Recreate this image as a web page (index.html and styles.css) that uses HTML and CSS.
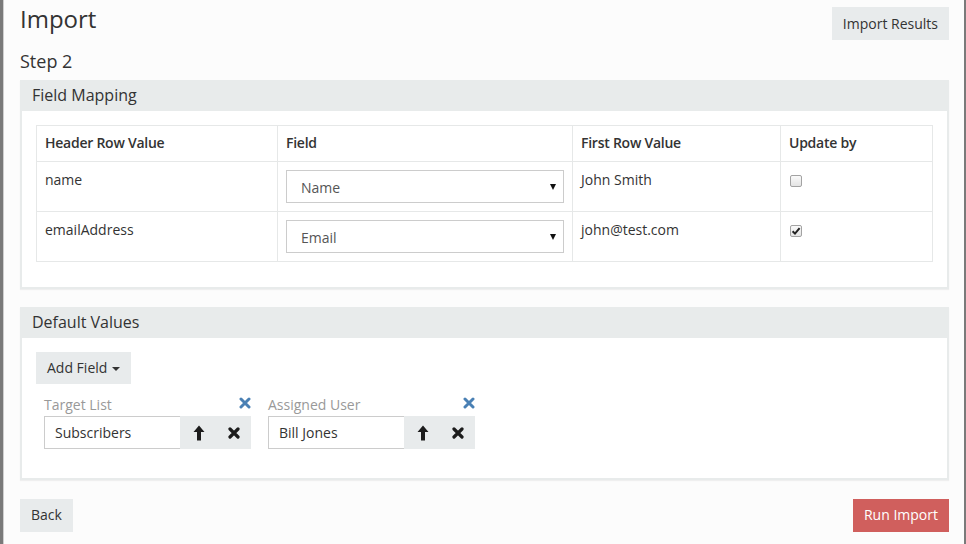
FILE: index.html
```html
<!DOCTYPE html>
<html>
<head>
<meta charset="utf-8">
<link rel="stylesheet" href="styles.css">
</head>
<body>
<div class="page">
  <div class="topbar">
    <h1 class="title">Import</h1>
    <button class="btn btn-top">Import Results</button>
  </div>
  <h2 class="step">Step 2</h2>

  <section class="panel">
    <div class="panel-heading">Field Mapping</div>
    <div class="panel-body">
      <table class="map">
        <colgroup>
          <col class="c1"><col class="c2"><col class="c3"><col class="c4">
        </colgroup>
        <thead>
          <tr><th>Header Row Value</th><th>Field</th><th>First Row Value</th><th>Update by</th></tr>
        </thead>
        <tbody>
          <tr>
            <td>name</td>
            <td><div class="select-wrap"><select class="select"><option>Name</option></select></div></td>
            <td>John Smith</td>
            <td><span class="check"></span></td>
          </tr>
          <tr>
            <td>emailAddress</td>
            <td><div class="select-wrap"><select class="select"><option>Email</option></select></div></td>
            <td>john@test.com</td>
            <td><span class="check checked"><svg viewBox="0 0 12 12" width="12" height="12"><path d="M2.6 6.2 L5 8.6 L9.6 3.2" fill="none" stroke="#222" stroke-width="2"/></svg></span></td>
          </tr>
        </tbody>
      </table>
    </div>
  </section>

  <section class="panel panel-defaults">
    <div class="panel-heading">Default Values</div>
    <div class="panel-body">
      <button class="btn btn-add">Add Field <span class="caret"></span></button>
      <div class="groups">
        <div class="group">
          <div class="group-label">
            <span>Target List</span>
            <svg class="ico-remove-blue" viewBox="0 0 12 12" width="12" height="12"><path d="M2 2 L10 10 M10 2 L2 10" stroke="#4a80b4" stroke-width="3" stroke-linecap="round"/></svg>
          </div>
          <div class="input-group">
            <div class="input">Subscribers</div>
            <div class="addon">
              <span class="icon-btn up"><svg viewBox="0 0 12 16" width="12" height="16"><path d="M6 0.5 L11.5 7 L8 7 L8 15.5 L4 15.5 L4 7 L0.5 7 Z" fill="#1c1c1c"/></svg></span>
              <span class="icon-btn rm"><svg viewBox="0 0 12 12" width="12" height="12"><path d="M2 2 L10 10 M10 2 L2 10" stroke="#1c1c1c" stroke-width="3.2" stroke-linecap="round"/></svg></span>
            </div>
          </div>
        </div>
        <div class="group">
          <div class="group-label">
            <span>Assigned User</span>
            <svg class="ico-remove-blue" viewBox="0 0 12 12" width="12" height="12"><path d="M2 2 L10 10 M10 2 L2 10" stroke="#4a80b4" stroke-width="3" stroke-linecap="round"/></svg>
          </div>
          <div class="input-group">
            <div class="input">Bill Jones</div>
            <div class="addon">
              <span class="icon-btn up"><svg viewBox="0 0 12 16" width="12" height="16"><path d="M6 0.5 L11.5 7 L8 7 L8 15.5 L4 15.5 L4 7 L0.5 7 Z" fill="#1c1c1c"/></svg></span>
              <span class="icon-btn rm"><svg viewBox="0 0 12 12" width="12" height="12"><path d="M2 2 L10 10 M10 2 L2 10" stroke="#1c1c1c" stroke-width="3.2" stroke-linecap="round"/></svg></span>
            </div>
          </div>
        </div>
      </div>
    </div>
  </section>

  <div class="footer">
    <button class="btn btn-foot">Back</button>
    <button class="btn btn-foot btn-danger">Run Import</button>
  </div>
</div>
</body>
</html>
```
FILE: styles.css
```css
* { box-sizing: border-box; }
html, body { margin: 0; padding: 0; }
body {
  font-family: "Open Sans", "Noto Sans", sans-serif;
  font-size: 14px;
  line-height: 20px;
  color: #333;
  background: #fcfcfc;
}
.page {
  width: 966px;
  min-height: 544px;
  border-left: 3px solid #7a7a7a;
  border-right: 2px solid #7a7a7a;
  box-shadow: inset 1px 0 0 #cfcfcf;
  padding: 0 15px 0 17px;
  background: #fcfcfc;
}
.topbar {
  display: flex;
  justify-content: space-between;
  align-items: flex-start;
  height: 45px;
}
.title {
  margin: 4px 0 0;
  font-size: 24px;
  line-height: 30px;
  font-weight: 400;
  color: #333;
}
.btn {
  font-family: inherit;
  font-size: 14px;
  line-height: 20px;
  color: #333;
  background: #e8ebec;
  border: 0;
  border-radius: 0;
  padding: 6px 11px;
  height: 32px;
  cursor: pointer;
}
.btn-top { margin-top: 7px; height: 33px; }
.step {
  margin: 0;
  font-size: 18px;
  line-height: 24px;
  font-weight: 400;
  height: 35px;
  padding-top: 4px;
}
.panel {
  margin-bottom: 18px;
  box-shadow: 0 1px 1px rgba(0,0,0,0.05);
}
.panel-heading {
  height: 31px;
  line-height: 30px;
  padding: 0 12px;
  font-size: 16px;
  background: #e8ebeb;
  color: #333;
}
.panel-body {
  background: #fff;
  border: 2px solid #e8ebeb;
  border-top: 0;
  padding: 14px;
}
.map {
  width: 896px;
  border-collapse: collapse;
  table-layout: fixed;
  margin-bottom: 11px;
}
.c1 { width: 241px; }
.c2 { width: 295px; }
.c3 { width: 208px; }
.c4 { width: 152px; }
.map th, .map td {
  border: 1px solid #e6e8e8;
  padding: 8px;
  text-align: left;
  vertical-align: top;
  line-height: 20px;
}
.map th { font-weight: 600; letter-spacing: -0.25px; padding-top: 7px; padding-bottom: 8px; height: 36px; }
.map td { height: 50px; }
.select-wrap { position: relative; }
.select-wrap::after {
  content: "";
  position: absolute;
  right: 8px;
  top: 14px;
  border-left: 3.5px solid transparent;
  border-right: 3.5px solid transparent;
  border-top: 6px solid #111;
}
.select {
  -webkit-appearance: none;
  appearance: none;
  display: block;
  width: 100%;
  height: 33px;
  border: 1px solid #ccc;
  border-radius: 0;
  background: #fff;
  font-family: inherit;
  font-size: 14px;
  color: #555;
  padding: 1px 20px 0 14px;
  margin: 0;
  outline: none;
}
.check {
  display: block;
  width: 12px;
  height: 12px;
  margin: 5px 0 0 1px;
  border: 1px solid #a3a3a3;
  border-radius: 2px;
  background: linear-gradient(#fafafa, #e4e4e4);
  position: relative;
}
.check svg {
  position: absolute;
  left: -1px;
  top: -1px;
  width: 12px;
  height: 12px;
}
.btn-add { display: block; padding: 6px 11px; }
.caret {
  display: inline-block;
  width: 0; height: 0;
  margin-left: 1px;
  vertical-align: middle;
  border-left: 4px solid transparent;
  border-right: 4px solid transparent;
  border-top: 4px solid #333;
}
.groups {
  display: flex;
  gap: 17px;
  padding-left: 8px;
  margin-top: 10px;
  margin-bottom: 15px;
}
.group { width: 207px; }
.group-label {
  display: flex;
  justify-content: space-between;
  align-items: center;
  color: #999;
  height: 22px;
  line-height: 20px;
}
.ico-remove-blue { margin-top: -4px; }
.input-group {
  display: flex;
  height: 33px;
}
.input {
  width: 136px;
  border: 1px solid #ccc;
  border-right: 0;
  background: #fff;
  padding: 0 10px;
  line-height: 31px;
  color: #333;
}
.addon {
  flex: 1;
  display: flex;
  background: #e8ebec;
}
.icon-btn {
  display: flex;
  align-items: center;
  justify-content: center;
}
.icon-btn.up { width: 37px; }
.icon-btn.rm { width: 34px; }
.footer {
  display: flex;
  justify-content: space-between;
  padding-top: 1px;
}
.btn-foot { height: 33px; padding: 6px 11px 7px; }
.btn-danger { background: #d05f5d; color: #fff; }
```
